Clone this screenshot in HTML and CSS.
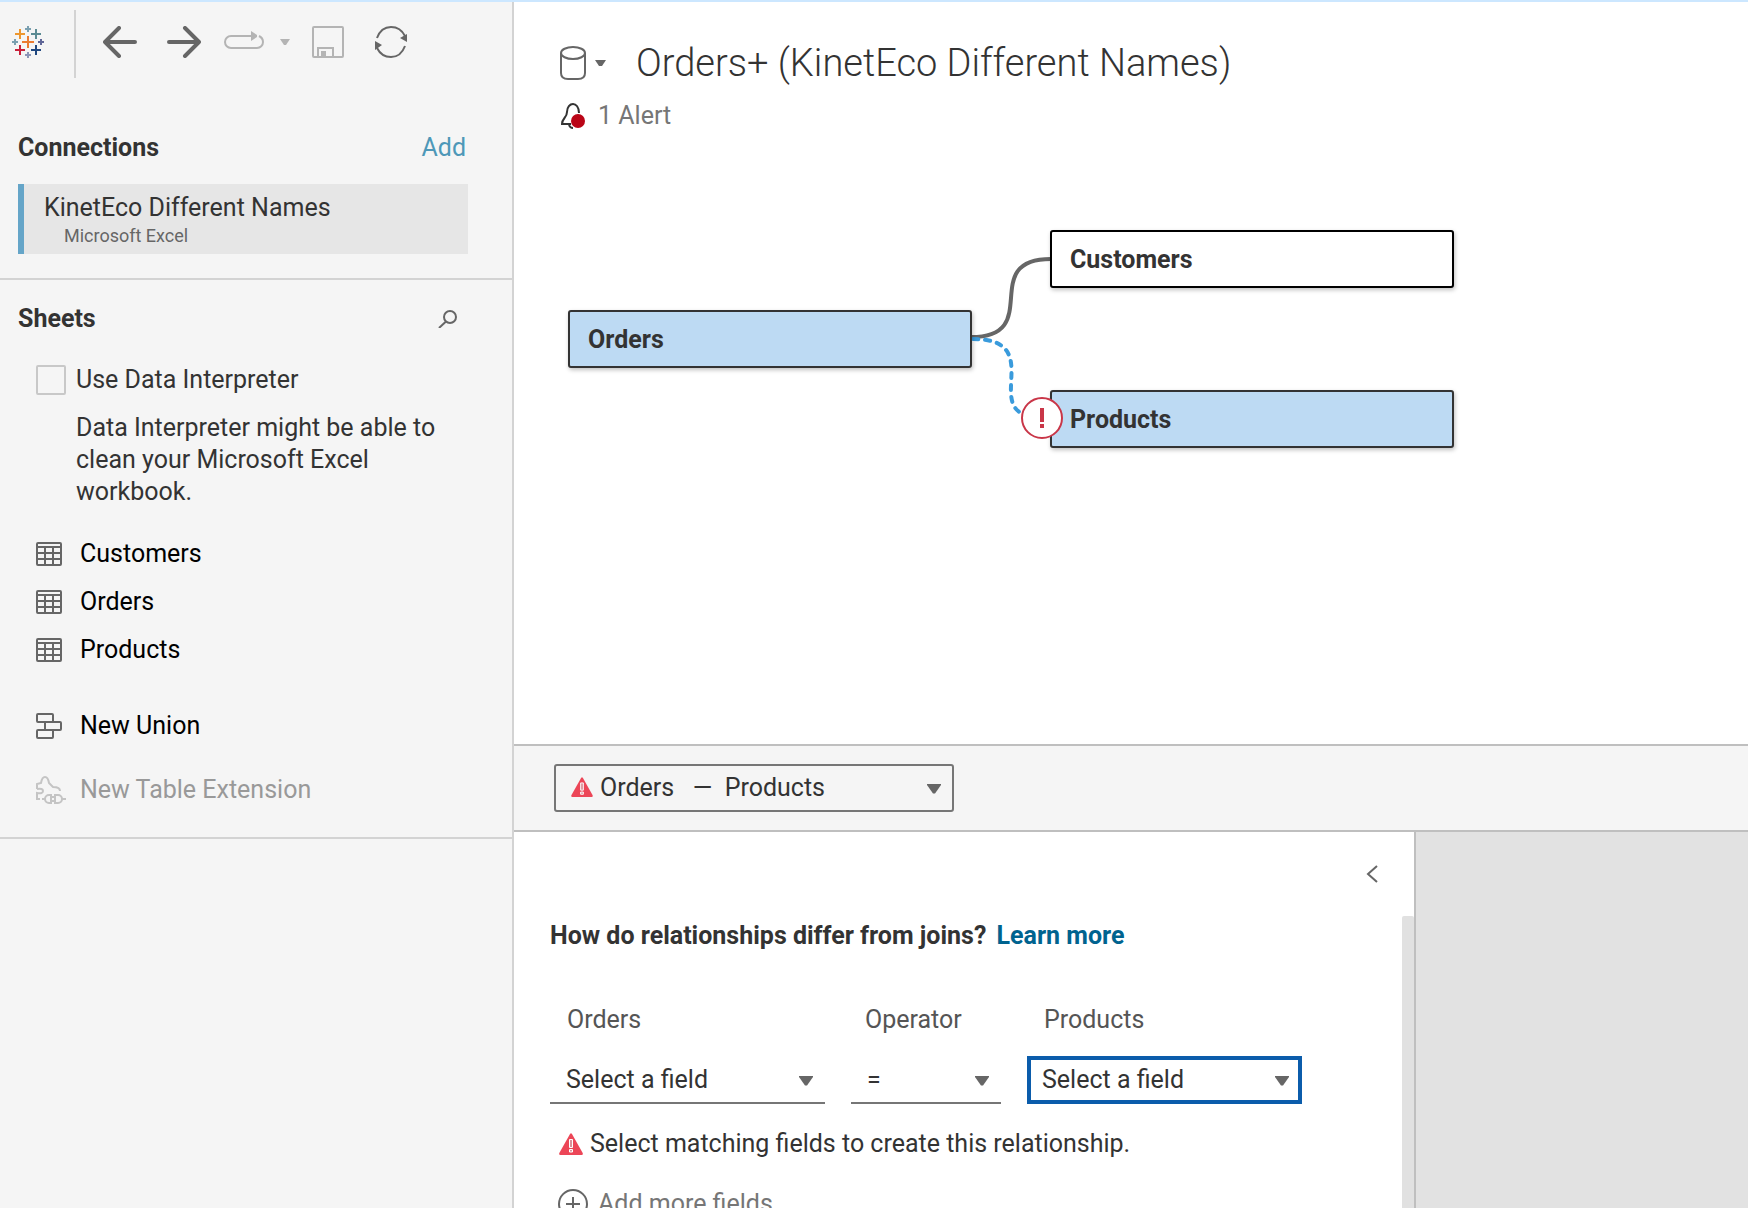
FILE: index.html
```html
<!DOCTYPE html>
<html lang="en">
<head>
<meta charset="utf-8">
<title>Orders+ (KinetEco Different Names)</title>
<meta name="viewport" content="width=device-width, initial-scale=1">
<link rel="stylesheet" href="styles.css">
</head>
<body>
<svg class="defs" aria-hidden="true">
  <symbol id="table" viewBox="0 0 26 24"><rect x="1" y="1" width="24" height="22" rx="1" fill="none" stroke="#666" stroke-width="2"/><path d="M1 5h24M1 11h24M1 17h24M9 5v18M17 5v18" fill="none" stroke="#666" stroke-width="2"/></symbol>
  <symbol id="caret" viewBox="0 0 14 10"><path d="M0 0h14v1L8 9.500H6L0 1z" fill="#666"/></symbol>
  <symbol id="warning" viewBox="0 0 24 22"><path d="M11 1q1-1.500 2 0l10.700 19q.5 2-1 2H1.300q-1.500 0-1-2z" fill="#ec4657"/><path d="M10.500 6.500h3v8h-3zM10.500 16.500h3v2.500h-3z" fill="#d9929a" stroke="#fff"/></symbol>
</svg>
<div class="app">
  <aside class="sidebar">
    <nav class="toolbar" aria-label="Toolbar">
      <button class="tool logo" aria-label="Start page"><svg width="32" height="32" viewBox="0 0 32 32" fill="none" stroke-width="2"><path stroke="#eb7c32" d="M16 10v12M10 16h12"/><path stroke="#ed972f" d="M8 3v10M3 8h10"/><path stroke="#5b8b93" d="M24 3v10M19 8h10"/><path stroke="#c9203a" d="M8 19v10M3 24h10"/><path stroke="#1f477f" d="M24 19v10M19 24h10"/><path stroke="#7ba0b0" d="M16 0v6M13 3h6M3 13v6M0 16h6"/><path stroke="#5f6697" d="M29 13v6M26 16h6"/><path stroke="#8c96b8" d="M16 26v6M13 29h6"/></svg></button>
      <span class="separator"></span>
      <button class="tool" aria-label="Back"><svg width="34" height="32" viewBox="0 0 34 32" fill="none" stroke="#666" stroke-width="4" stroke-linecap="round" stroke-linejoin="round"><path d="M16 2L2 16l14 14M2 16h30"/></svg></button>
      <button class="tool forward" aria-label="Forward"><svg width="34" height="32" viewBox="0 0 34 32" fill="none" stroke="#666" stroke-width="4" stroke-linecap="round" stroke-linejoin="round"><path d="M18 2l14 14-14 14M32 16H2"/></svg></button>
      <button class="tool redo" aria-label="Replay" disabled><svg width="40" height="22" viewBox="0 0 40 22" fill="none" stroke="#b4b4b4" stroke-width="2"><path d="M28 5H7a6 6 0 0 0-6 6a6 6 0 0 0 6 6h26a6 6 0 0 0 6-6q0-4-4-6"/><path d="M27 0l6 4v2l-6 4z" fill="#b4b4b4" stroke="none"/></svg></button>
      <button class="tool replay-menu" aria-label="Replay speed" disabled><svg width="10" height="6" viewBox="0 0 10 6"><path d="M0 0h10L6 6H4z" fill="#b4b4b4"/></svg></button>
      <button class="tool save" aria-label="Save" disabled><svg width="32" height="32" viewBox="0 0 32 32" fill="none" stroke="#b4b4b4" stroke-width="2"><rect x="1" y="1" width="30" height="30" rx="1"/><path d="M6 31v-9h15v9"/><path d="M9 25h5v5H9z" fill="#b4b4b4" stroke="none"/></svg></button>
      <button class="tool refresh" aria-label="Refresh"><svg width="34" height="32" viewBox="0 0 34 32" fill="none" stroke="#666" stroke-width="2"><path d="M3 12C6 4 11 1 17 1s11 3 14 9M31 20c-3 8-8 11-14 11S6 28 3 22"/><path d="M33 8v8l-7-4zM1 15v9l7-5z" fill="#666" stroke="none"/></svg></button>
    </nav>
    <section class="connections">
      <header class="section-head"><h2>Connections</h2><a class="add" href="#add">Add</a></header>
      <button class="connection"><span class="connection-name">KinetEco Different Names</span><span class="connection-type">Microsoft Excel</span></button>
    </section>
    <section class="sheets">
      <header class="section-head"><h2>Sheets</h2><button class="search" aria-label="Search sheets"><svg width="20" height="18" viewBox="0 0 20 18" fill="none" stroke="#666" stroke-width="2"><circle cx="12" cy="7" r="6"/><path d="M8 11.500L1 18"/></svg></button></header>
      <label class="interpreter"><input type="checkbox">Use Data Interpreter</label>
      <p class="hint">Data Interpreter might be able to clean your Microsoft Excel workbook.</p>
      <ul class="sheet-list">
        <li><button class="sheet"><svg width="26" height="24"><use href="#table"/></svg>Customers</button></li>
        <li><button class="sheet"><svg width="26" height="24"><use href="#table"/></svg>Orders</button></li>
        <li><button class="sheet"><svg width="26" height="24"><use href="#table"/></svg>Products</button></li>
      </ul>
      <div class="sheet-actions">
        <button class="sheet"><svg width="26" height="26" viewBox="0 0 26 26" fill="none" stroke="#666" stroke-width="2"><rect x="1" y="1" width="16" height="8" rx="1"/><rect x="9" y="9" width="16" height="8" rx="1"/><rect x="1" y="17" width="16" height="8" rx="1"/></svg>New Union</button>
        <button class="sheet" disabled><svg width="30" height="28" viewBox="0 0 30 28" fill="none" stroke="#c4c4c4" stroke-width="2"><path d="M1 13V8l4-1q1-6 4-6t4 6l4 4q7 0 7 4M1 13q6-1 6 2T1 17v6h3"/><path d="M6 23h3m6-4h-2a4 4 0 0 0 0 8h2zM15 21h3m-3 4h3m1-6h3a4 4 0 0 1 0 8h-3zM26 23h4"/></svg>New Table Extension</button>
      </div>
    </section>
  </aside>
  <main class="main">
    <section class="model">
      <header class="model-head">
        <div class="title-row">
          <button class="source" aria-label="Data source menu"><svg width="26" height="34" viewBox="0 0 26 34" fill="none" stroke="#666" stroke-width="2"><ellipse cx="13" cy="7" rx="12" ry="6"/><path d="M1 7v20q0 6 7 6h10q7 0 7-6V7"/></svg><svg width="11" height="6" viewBox="0 0 11 6"><path d="M0 0h11L7 6H4z" fill="#666"/></svg></button>
          <h1>Orders+ (KinetEco Different Names)</h1>
        </div>
        <button class="alert"><svg width="26" height="26" viewBox="0 0 26 26" fill="none" stroke="#333" stroke-width="2"><path d="M19 10C19 4 16 1 13 1S7 4 7 9c0 6-5 6-5 12h9M9 22q1 3 4 3"/><circle cx="18" cy="18" r="7" fill="#ba0517" stroke="none"/></svg>1 Alert</button>
      </header>
      <div class="canvas">
        <svg class="links" width="100" height="220" viewBox="0 0 100 220" fill="none"><path d="M0 107C74 107 6 29 80 29" stroke="#666" stroke-width="4"/><path d="M2 109C70 109 20 170 52 184" stroke="#3a9bdc" stroke-width="4" stroke-dasharray="5 7" stroke-linecap="round"/></svg>
        <button class="node selected orders">Orders</button>
        <button class="node customers">Customers</button>
        <button class="node selected products">Products</button>
        <button class="problem" aria-label="Relationship error"><svg width="42" height="42" viewBox="0 0 42 42"><circle cx="21" cy="21" r="20" fill="#fff" stroke="#c93648" stroke-width="2"/><path d="M19 11h4v14h-4zM19 27h4v4h-4z" fill="#c93648"/></svg></button>
      </div>
    </section>
    <section class="picker">
      <div class="select-box relation">
        <svg class="lead" width="22" height="20"><use href="#warning"/></svg>
        <select aria-label="Relationship"><option>Orders&nbsp;&nbsp; —&nbsp; Products</option></select>
        <svg class="arrow" width="14" height="10"><use href="#caret"/></svg>
      </div>
    </section>
    <section class="details">
      <div class="relationship">
        <button class="collapse" aria-label="Collapse"><svg width="12" height="18" viewBox="0 0 12 18" fill="none" stroke="#666" stroke-width="2"><path d="M11 1L2 9l9 8"/></svg></button>
        <div class="scroller">
          <div class="form">
            <h3>How do relationships differ from joins? <a href="#learn">Learn more</a></h3>
            <div class="fields">
              <div class="field"><label for="left">Orders</label><div class="select-box line"><select id="left"><option>Select a field</option></select><svg class="arrow" width="14" height="10"><use href="#caret"/></svg></div></div>
              <div class="field operator"><label for="op">Operator</label><div class="select-box line"><select id="op"><option>=</option></select><svg class="arrow" width="14" height="10"><use href="#caret"/></svg></div></div>
              <div class="field"><label for="right">Products</label><div class="select-box active"><select id="right"><option>Select a field</option></select><svg class="arrow" width="14" height="10"><use href="#caret"/></svg></div></div>
            </div>
            <p class="message"><svg width="24" height="22"><use href="#warning"/></svg>Select matching fields to create this relationship.</p>
            <button class="more"><svg width="30" height="30" viewBox="0 0 30 30" fill="none" stroke="#666" stroke-width="2"><circle cx="15" cy="15" r="14"/><path d="M15 8v14M8 15h14"/></svg>Add more fields</button>
          </div>
          <div class="scrollbar"></div>
        </div>
      </div>
      <div class="grid-area"></div>
    </section>
  </main>
</div>
</body>
</html>
```
FILE: styles.css
```css
* { box-sizing: border-box; }
body { margin: 0; font: 25px/32px Roboto, "Liberation Sans", sans-serif; color: #333; }
button, select, input { font: inherit; color: inherit; margin: 0; }
button { background: none; border: 0; padding: 0; text-align: left; }
svg { display: block; flex: none; }
h1, h2, h3, p, ul { margin: 0; padding: 0; }
h2, h3 { font-size: 25px; font-weight: 700; line-height: 32px; }
ul { list-style: none; }
a { text-decoration: none; }
.defs { position: absolute; width: 0; height: 0; }

.app { display: flex; height: 100vh; border-top: 2px solid #cce7ff; overflow: hidden; }

/* Sidebar */
.sidebar { flex: 0 0 514px; background: #f5f5f5; border-right: 2px solid #d3d3d3; }
.toolbar { display: flex; align-items: center; height: 80px; padding-left: 12px; }
.separator { width: 2px; height: 68px; margin: 4px 27px 0 30px; background: #d3d3d3; }
.forward { margin-left: 30px; }
.redo { margin-left: 23px; }
.replay-menu { margin-left: 16px; }
.save { margin-left: 22px; }
.refresh { margin-left: 30px; }
.connections { padding: 50px 44px 24px 18px; border-bottom: 2px solid #d3d3d3; }
.section-head { display: flex; align-items: center; justify-content: space-between; }
.connections .section-head { padding-right: 2px; }
.add { color: #4e98b8; }
.connection { display: flex; flex-direction: column; width: 100%; height: 70px; margin-top: 20px; padding: 9px 0 0 20px; border-left: 6px solid #65a5c8; background: #e6e6e6; }
.connection-name { line-height: 30px; }
.connection-type { padding-left: 20px; font-size: 18px; line-height: 26px; color: #666; }
.sheets { padding: 23px 18px 23px; border-bottom: 2px solid #d3d3d3; }
.search { margin-right: 36px; }
.interpreter { display: flex; align-items: center; gap: 10px; margin: 29px 0 0 18px; }
.interpreter input { appearance: none; width: 30px; height: 30px; border: 2px solid #c8c8c8; border-radius: 2px; }
.hint { width: 380px; margin: 16px 0 0 58px; }
.sheet-list { margin: 22px 0 0 18px; }
.sheet { display: flex; align-items: center; height: 48px; color: #000; }
.sheet svg { margin-right: 18px; }
.sheet:disabled { color: #999; }
.sheet:disabled svg { margin-right: 14px; }
.sheet-actions { display: grid; gap: 16px; margin: 28px 0 0 18px; }

/* Data model */
.main { flex: 1; min-width: 0; display: grid; grid-template-rows: 1fr auto 376px; background: #fff; }
.model-head { padding: 36px 46px 0; }
.title-row { display: flex; align-items: center; gap: 30px; }
.source { display: flex; align-items: center; gap: 9px; }
h1 { font-size: 38px; line-height: 50px; font-weight: 350; white-space: nowrap; }
.alert { display: flex; align-items: center; gap: 12px; margin-top: 12px; color: #767676; }
.canvas { position: relative; }
.node { position: absolute; width: 404px; height: 58px; padding: 2px 0 0 18px; border: 2px solid #000; border-radius: 3px; background: #fff; box-shadow: 1px 2px 4px rgba(0, 0, 0, .25); font-weight: 700; }
.node.selected { background: #bddaf3; border-color: #333; }
.orders { left: 54px; top: 178px; }
.customers { left: 536px; top: 98px; }
.products { left: 536px; top: 258px; }
.links { position: absolute; left: 457px; top: 98px; }
.problem { position: absolute; left: 507px; top: 265px; }

/* Selects */
.select-box { position: relative; height: 48px; }
.select-box select { appearance: none; display: block; width: 100%; height: 100%; border: 0; outline: 0; background: none; padding: 0 40px 0 16px; }
.arrow { position: absolute; right: 12px; top: 50%; margin-top: -4px; pointer-events: none; }
.lead { position: absolute; left: 15px; top: 11px; pointer-events: none; }
.line { border-bottom: 2px solid #767676; }
.line select { padding-top: 2px; }
.line .arrow { margin-top: -3px; }
.active { border: 4px solid #0b5cab; }
.active select { padding-left: 11px; }
.active .arrow { right: 9px; }
.relation { width: 400px; border: 2px solid #767676; border-radius: 3px; }
.relation select { padding-left: 44px; }
.relation .arrow { right: 11px; }
.picker { padding: 18px 40px; border: solid #bfbfbf; border-width: 2px 0; background: #f5f5f5; }

/* Relationship details */
.details { display: flex; min-height: 0; overflow: hidden; }
.relationship { flex: 0 1 902px; display: flex; flex-direction: column; border-right: 2px solid #bfbfbf; }
.collapse { align-self: flex-end; margin: 33px 36px 33px 0; }
.scroller { flex: 1; min-height: 0; display: flex; justify-content: space-between; overflow: hidden; }
.scrollbar { width: 12px; border-radius: 2px 2px 0 0; background: #e1e1e1; }
.form { padding: 4px 0 0 36px; }
h3 a { margin-left: 4px; color: #00638f; }
.fields { display: flex; gap: 26px; margin-top: 52px; }
.field { width: 275px; }
.operator { width: 150px; }
.field label { display: block; margin-bottom: 20px; padding-left: 17px; color: #555; }
.operator label { padding-left: 14px; }
.message { display: flex; align-items: center; gap: 7px; margin-top: 24px; padding-left: 9px; }
.more { display: flex; align-items: center; gap: 10px; margin-top: 28px; padding-left: 8px; color: #767676; }
.grid-area { flex: 1; background: #e2e2e2; }
```
